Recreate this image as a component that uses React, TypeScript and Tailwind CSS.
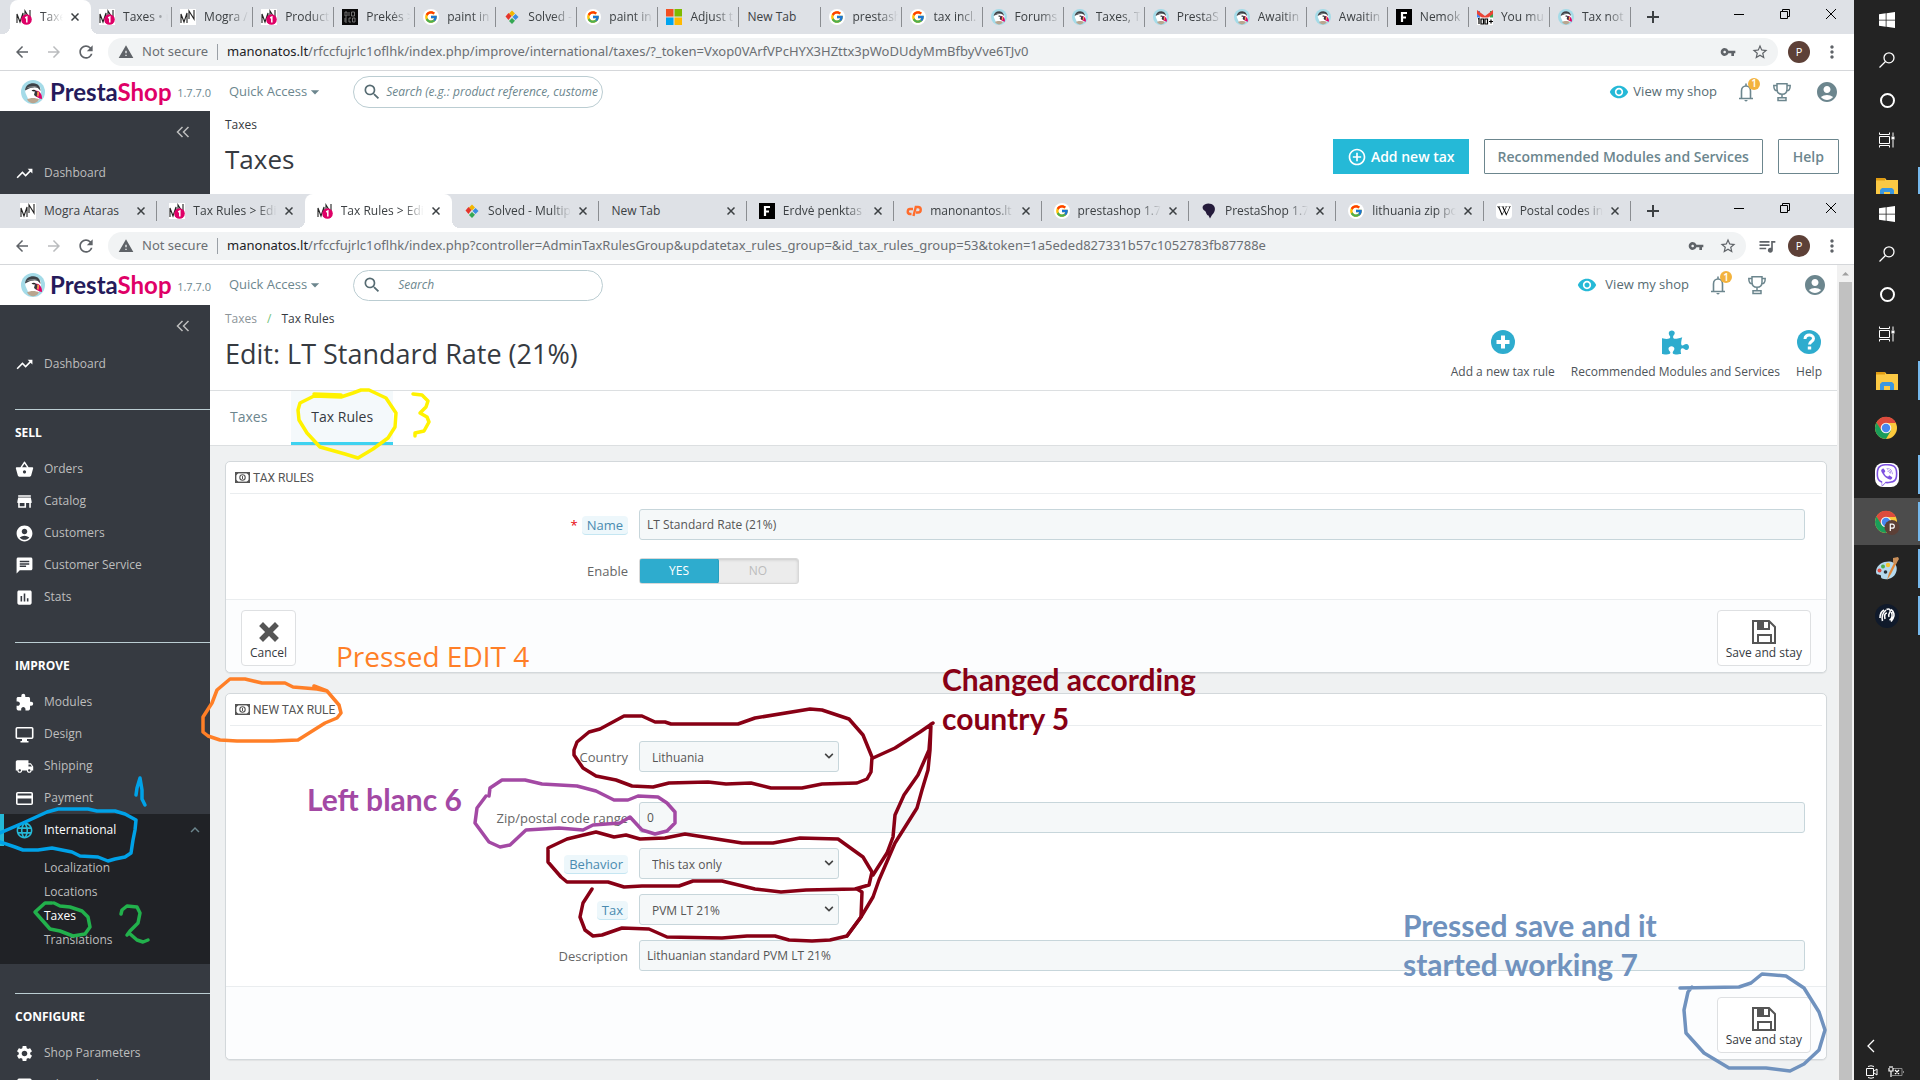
import React from "react";
import {
  MdAccountCircle,
  MdAddCircleOutline,
  MdArrowBack,
  MdArrowDropDown,
  MdArrowForward,
  MdAssessment,
  MdChat,
  MdExtension,
  MdKeyboardArrowUp,
  MdLanguage,
  MdLocalShipping,
  MdMoreVert,
  MdQueueMusic,
  MdRefresh,
  MdRemoveRedEye,
  MdSearch,
  MdSettings,
  MdSettingsApplications,
  MdShoppingBasket,
  MdStarBorder,
  MdStore,
  MdTrendingUp,
  MdVpnKey,
  MdWarning,
} from "react-icons/md";
import { FcGoogle } from "react-icons/fc";
import { FaChevronDown, FaPuzzlePiece, FaViber, FaWikipediaW } from "react-icons/fa";

/* ---------- Logos ---------- */

function Puffin({ className }: { className?: string }) {
  return (
    <svg viewBox="0 0 24 24" className={className} aria-hidden="true">
      <circle cx="12" cy="12" r="12" fill="#a4dbe8" />
      <path d="M4.500 13C3 7 7 4 12 4s9 3 8 9l-3 8H8z" fill="#fff" />
      <path d="M4 10.500C4.500 5.500 8 3.200 12.500 3.300 17 3.500 19.500 6.500 19.500 11c-2-3.200-4.500-4-7-3.600-3.500.2-5.500 1.600-8.500 3.100z" fill="#3c4146" />
      <path d="M5 8.500c4-2.800 8.500-3.200 12-1-4-.8-8.500 0-12 1z" fill="#7d8488" />
      <path d="M10.500 10.500c1.500-1.200 3.500-1 4.500.3-1 1.200-3.200 1-4.500-.3z" fill="#222" />
      <path d="M14.500 10.500c4 0 6.500 3 6.500 8.500-3-.5-6-2-7-4z" fill="#df0067" />
      <path d="M14 11l2.500.3-1 5.700-2.500-2z" fill="#33393d" />
      <path d="M16.500 11.500l1.500.8-.5 4.500-1.300-.8z" fill="#f5b04a" />
      <path d="M6 19.500c3-2 9-2 12 0-3 5-9 5-12 0z" fill="#b9a58f" />
    </svg>
  );
}

function Mogra({ badge }: { badge?: boolean }) {
  return (
    <svg viewBox="0 0 16 16" className="size-4" aria-hidden="true">
      <rect width="16" height="16" fill="#fff" />
      <path d="M1 14V5l3 8 3-9v10M9 10V2l5 8V1" fill="none" stroke="#222" strokeWidth="1.100" />
      {badge && <circle cx="10.500" cy="10.500" r="5.300" fill="#df0067" />}
      {badge && <path d="M9.200 9l1.600-1v5.500" fill="none" stroke="#fff" strokeWidth="1.500" />}
    </svg>
  );
}

function BlackF() {
  return (
    <svg viewBox="0 0 16 16" className="size-4" aria-hidden="true">
      <rect width="16" height="16" fill="#000" />
      <path d="M6 13V4h5M6 8.500h4" fill="none" stroke="#fff" strokeWidth="2.200" />
    </svg>
  );
}

function BioEco() {
  return (
    <svg viewBox="0 0 16 16" className="size-4" aria-hidden="true">
      <rect width="16" height="16" fill="#0a0a0a" />
      <path
        d="M3 3h2v4H3zM7 3v4M9.500 3h3v4h-3zM5 9H3v4h2M3 11h2M9 9H7v4h2M10.500 9h2.500v4h-2.500z"
        fill="none"
        stroke="#8a8a8a"
        strokeWidth=".8"
      />
    </svg>
  );
}

function Diamonds() {
  return (
    <svg viewBox="0 0 16 16" className="size-4" aria-hidden="true">
      <path d="M8 1.500l3 3-3 3-3-3z" fill="#f2b600" />
      <path d="M4.500 4l3 3-3 4-3-3.500z" fill="#e5352b" />
      <path d="M11.500 5l3 3-3 3-3-3z" fill="#3b8de0" />
      <path d="M8 9l3 2.800L8 15l-3-3z" fill="#35a853" />
    </svg>
  );
}

function Microsoft() {
  return (
    <svg viewBox="0 0 16 16" className="size-4" aria-hidden="true">
      <path d="M0 0h7.500v7.500H0z" fill="#f25022" />
      <path d="M8.500 0H16v7.500H8.500z" fill="#7fba00" />
      <path d="M0 8.500h7.500V16H0z" fill="#00a4ef" />
      <path d="M8.500 8.500H16V16H8.500z" fill="#ffb900" />
    </svg>
  );
}

function Gmail() {
  return (
    <svg viewBox="0 0 16 16" className="size-4" aria-hidden="true">
      <path d="M0 2h3v8H0z" fill="#4285f4" />
      <path d="M13 2h3v8h-3z" fill="#34a853" />
      <path d="M0 1l8 6 8-6v4l-8 6-8-6z" fill="#ea4335" />
      <rect y="8.500" width="16" height="7.500" fill="#fff" />
      <path
        d="M1 10l1-.5V15M4 10h2.500v5H4zM8 10h2.500v5H8zM12 12.500h4M14 10.500v4"
        fill="none"
        stroke="#000"
        strokeWidth="1.200"
      />
    </svg>
  );
}

function Google() {
  return (
    <span className="flex size-4 items-center justify-center rounded-full bg-white">
      <FcGoogle className="size-3.5" />
    </span>
  );
}

function HostPanel() {
  return (
    <svg viewBox="0 0 16 16" className="size-4" aria-hidden="true">
      <path d="M7 6H4.500a2.500 2.500 0 0 0-.5 5h1.500" fill="none" stroke="#ff6c2c" strokeWidth="2.400" />
      <path d="M7.500 13l2.300-9H12a2.700 2.700 0 0 1 0 5.500H10" fill="none" stroke="#ff6c2c" strokeWidth="2.400" />
    </svg>
  );
}

function DarkBird() {
  return (
    <svg viewBox="0 0 16 16" className="size-4" aria-hidden="true">
      <path d="M2 3C4 0 10-.5 13 3c2 3 .5 7-2 9l-2 3.500-1.500-3C5 12 5.500 9 4 8 2 7 1 5 2 3z" fill="#251b3b" />
    </svg>
  );
}

function Wikipedia() {
  return (
    <span className="flex size-4 items-center justify-center rounded-sm bg-white">
      <FaWikipediaW className="size-3.5 text-black" />
    </span>
  );
}

const PS = () => <Puffin className="size-4" />;

/* ---------- Browser chrome ---------- */

type Tab = { title: string; icon?: React.ReactNode; active?: boolean; fade?: boolean };

function TabItem({ tab, wide, sep }: { tab: Tab; wide: boolean; sep: boolean }) {
  const closable = wide || tab.active;
  return (
    <div
      className={
        "relative flex h-full min-w-0 items-center gap-2 " +
        (wide ? "pr-2 pl-3 first:pl-2.5 " : tab.active ? "pr-2 pl-1.5 " : "pr-1 pl-2 ") +
        (tab.active
          ? "rounded-t-lg bg-white before:absolute before:bottom-0 before:-left-2 before:size-2 before:bg-[radial-gradient(circle_at_0_0,transparent_8px,white_8px)] after:absolute after:-right-2 after:bottom-0 after:size-2 after:bg-[radial-gradient(circle_at_100%_0,transparent_8px,white_8px)]"
          : "")
      }
    >
      {tab.icon && <span className="shrink-0">{tab.icon}</span>}
      <button
        className={
          "min-w-0 flex-1 overflow-hidden text-left text-xs whitespace-nowrap text-[#3c4043] " +
          (tab.fade ? "[mask-image:linear-gradient(to_right,black_calc(100%-20px),transparent)]" : "")
        }
      >
        {tab.title}
      </button>
      {closable && (
        <button aria-label={"Close " + tab.title} className="-ml-1 flex size-4 shrink-0 items-center justify-center">
          <svg viewBox="0 0 8 8" className="size-2" aria-hidden="true">
            <path d="M.5.5l7 7M7.500.5l-7 7" stroke="#3c4043" strokeWidth="1.500" />
          </svg>
        </button>
      )}
      {sep && <span className="absolute top-[7px] right-0 h-5 w-px bg-[#8a8d91]" />}
    </div>
  );
}

function TabStrip({ tabs, wide }: { tabs: Tab[]; wide: boolean }) {
  return (
    <div className="flex h-[34px] shrink-0 bg-[#dee1e6] pl-2.5">
      <div className="grid min-w-0 flex-1 auto-cols-[minmax(0,1fr)] grid-flow-col">
        {tabs.map((t, i) => (
          <TabItem key={i} tab={t} wide={wide} sep={!t.active && !tabs[i + 1]?.active} />
        ))}
      </div>
      <div className="flex w-[223px] shrink-0 items-center">
        <button aria-label="New tab" className="flex w-11 justify-center">
          <svg viewBox="0 0 12 12" className="size-3" aria-hidden="true">
            <path d="M6 0v12M0 6h12" stroke="#3c4043" strokeWidth="2" />
          </svg>
        </button>
        <div className="ml-auto flex h-7 items-center self-start">
          <button aria-label="Minimize" className="flex w-[46px] justify-center">
            <svg viewBox="0 0 10 10" className="size-2.5" aria-hidden="true">
              <path d="M0 5.500h10" stroke="#000" />
            </svg>
          </button>
          <button aria-label="Restore" className="flex w-[46px] justify-center">
            <svg viewBox="0 0 10 10" className="size-2.5" aria-hidden="true">
              <path d="M.5 2.500h7v7h-7zM2.500 2.500v-2h7v7h-2" fill="none" stroke="#000" />
            </svg>
          </button>
          <button aria-label="Close window" className="flex w-[46px] justify-center">
            <svg viewBox="0 0 10 10" className="size-2.5" aria-hidden="true">
              <path d="M0 0l10 10M10 0L0 10" stroke="#000" />
            </svg>
          </button>
        </div>
      </div>
    </div>
  );
}

function AddressBar({ path, queue }: { path: string; queue?: boolean }) {
  return (
    <div className="flex h-[37px] shrink-0 items-center border-b border-[#d5d7da] bg-white pr-2.5 pl-1.5">
      <button aria-label="Back" className="flex w-8 justify-center text-[#5f6368]">
        <MdArrowBack className="size-[18px]" />
      </button>
      <button aria-label="Forward" className="flex w-8 justify-center text-[#babcbe]">
        <MdArrowForward className="size-[18px]" />
      </button>
      <button aria-label="Reload" className="flex w-8 justify-center text-[#5f6368]">
        <MdRefresh className="size-5" />
      </button>
      <div className="ml-1.5 flex h-7 min-w-0 flex-1 items-center rounded-full bg-[#f1f3f4] pl-2.5 font-['Noto_Sans'] text-[13px] text-[#6b6f73]">
        <MdWarning className="size-4 text-[#5f6368]" />
        <span className="ml-2">Not secure</span>
        <span className="mx-[9px] h-4 w-px bg-[#9aa0a6]" />
        <span className="min-w-0 flex-1 overflow-hidden whitespace-nowrap">
          <span className="text-[#202124]">manonatos.lt</span>
          {path}
        </span>
        <button aria-label="Saved passwords" className="flex w-8 justify-center text-[#5f6368]">
          <MdVpnKey className="size-4" />
        </button>
        <button aria-label="Bookmark" className="mr-0.5 flex w-8 justify-center text-[#5f6368]">
          <MdStarBorder className="size-[18px]" />
        </button>
      </div>
      {queue && (
        <button aria-label="Media" className="flex w-[42px] justify-center text-[#5f6368]">
          <MdQueueMusic className="size-5" />
        </button>
      )}
      <button
        aria-label="Profile"
        className={
          "flex size-[22px] items-center justify-center rounded-full bg-[#5d4037] text-[11px] text-white " +
          (queue ? "" : "ml-2.5")
        }
      >
        P
      </button>
      <button aria-label="Menu" className="ml-2.5 flex w-6 justify-center text-[#5f6368]">
        <MdMoreVert className="size-5" />
      </button>
    </div>
  );
}

/* ---------- Shop back office ---------- */

function Bell() {
  return (
    <button aria-label="Notifications" className="relative block size-6 text-[#6c868e]">
      <svg viewBox="0 0 24 24" className="size-6" aria-hidden="true">
        <path
          d="M5 18.500h14M7.500 18V11c0-3 2-5 4.500-5s4.500 2 4.500 5v7M12 6V3.500"
          fill="none"
          stroke="currentColor"
          strokeWidth="1.600"
        />
        <path d="M10 20h4l-2 1.800z" fill="currentColor" />
      </svg>
      <span className="absolute -top-0.5 left-3.5 flex size-3 items-center justify-center rounded-full bg-[#f3b33e] text-[10px] font-semibold text-white">
        1
      </span>
    </button>
  );
}

function Trophy() {
  return (
    <button aria-label="Achievements" className="text-[#6c868e]">
      <svg viewBox="0 0 20 20" className="size-5" aria-hidden="true">
        <path
          d="M5 1.800h10v5.500c0 3-2 5-5 5s-5-2-5-5zM5 3.500H1.800c0 3.500 1 5.500 3.700 5.500M15 3.500h3.200c0 3.500-1 5.500-3.700 5.500M10 12.500v3M6 15.800h8v2.700H6z"
          fill="none"
          stroke="currentColor"
          strokeWidth="1.500"
        />
      </svg>
    </button>
  );
}

function ShopHeader({ second }: { second?: boolean }) {
  return (
    <header className={"flex h-10 shrink-0 items-center bg-white " + (second ? "" : "pt-px")}>
      <div className="flex w-[211px] items-center pl-[21px]">
        <Puffin className="size-6 shrink-0" />
        <a href="#home" className="ml-[5px] font-['Lato'] text-2xl leading-6 font-bold text-[#251b5b]">
          Presta<span className="text-[#df0067]">Shop</span>
        </a>
        <span className="mt-1 ml-auto text-[11px] text-[#6c868e]">1.7.7.0</span>
      </div>
      <button className="ml-[18px] flex items-center text-[13px] text-[#6c868e]">
        Quick Access
        <MdArrowDropDown className="-ml-0.5 size-5" />
      </button>
      <label
        className={
          "ml-7 flex w-[250px] items-center rounded-full border border-[#bbcdd2] " + (second ? "h-[31px]" : "h-8")
        }
      >
        <MdSearch className="ml-2 size-5 shrink-0 text-[#566b72]" />
        <input
          aria-label="Search"
          placeholder={second ? "Search" : "Search (e.g.: product reference, custome"}
          className={
            "min-w-0 flex-1 bg-transparent text-xs italic outline-none placeholder:text-[#6c868e] " +
            (second ? "mr-2 ml-4" : "mr-1 ml-1")
          }
        />
      </label>
      <div className={"ml-auto flex items-center " + (second ? "pr-2.5" : "pr-[15px]")}>
        <a href="#shop" className={"flex items-center text-[13px] text-[#566b72] " + (second ? "gap-2" : "gap-1")}>
          <MdRemoveRedEye className="size-5 text-[#25b9d7]" />
          View my shop
        </a>
        <span className="ml-[17px] flex items-center">
          <Bell />
        </span>
        <span className={"flex " + (second ? "ml-[17px]" : "ml-3.5")}>
          <Trophy />
        </span>
        <button aria-label="Account" className={"text-[#6c868e] " + (second ? "ml-9" : "ml-[23px]")}>
          <MdAccountCircle className="size-6" />
        </button>
      </div>
    </header>
  );
}

function CollapseButton() {
  return (
    <button aria-label="Collapse menu" className="flex h-[43px] w-full items-center justify-end pr-5 pb-0.5">
      <svg viewBox="0 0 14 12" className="h-3 w-3.5" aria-hidden="true">
        <path d="M6.500 1l-5 5 5 5M12.500 1l-5 5 5 5" fill="none" stroke="#bebebe" strokeWidth="1.500" />
      </svg>
    </button>
  );
}

type NavItem = { label: string; Icon: React.ComponentType<{ className?: string }> };

function NavLink({ item }: { item: NavItem }) {
  return (
    <a href="#nav" className="flex h-8 items-center gap-2.5 pl-[15px] text-xs text-[#bebebe]">
      <item.Icon className="size-[19px] text-white" />
      {item.label}
    </a>
  );
}

function NavGroup({ title, items, children }: { title: string; items: NavItem[]; children?: React.ReactNode }) {
  return (
    <section className="mt-[29px]">
      <h2 className="ml-[15px] flex h-11 items-center border-t border-[#bbcdd2] pt-0.5 text-xs font-bold text-white">
        {title}
      </h2>
      {items.map((i) => (
        <NavLink key={i.label} item={i} />
      ))}
      {children}
    </section>
  );
}

function Monitor({ className }: { className?: string }) {
  return (
    <svg viewBox="0 0 19 19" className={className} aria-hidden="true">
      <rect x="1.300" y="2.800" width="16.400" height="10.400" rx="1" fill="none" stroke="currentColor" strokeWidth="1.600" />
      <path d="M7 14h5v2h1.500v1.500h-8V16H7z" fill="currentColor" />
    </svg>
  );
}

function Card({ className }: { className?: string }) {
  return (
    <svg viewBox="0 0 19 19" className={className} aria-hidden="true">
      <rect x="1.800" y="3.800" width="15.400" height="11.400" rx="1" fill="none" stroke="currentColor" strokeWidth="1.600" />
      <path d="M2 6.500h15v3H2z" fill="currentColor" />
    </svg>
  );
}

const sell: NavItem[] = [
  { label: "Orders", Icon: MdShoppingBasket },
  { label: "Catalog", Icon: MdStore },
  { label: "Customers", Icon: MdAccountCircle },
  { label: "Customer Service", Icon: MdChat },
  { label: "Stats", Icon: MdAssessment },
];
const improve: NavItem[] = [
  { label: "Modules", Icon: MdExtension },
  { label: "Design", Icon: Monitor },
  { label: "Shipping", Icon: MdLocalShipping },
  { label: "Payment", Icon: Card },
];
const configure: NavItem[] = [
  { label: "Shop Parameters", Icon: MdSettings },
  { label: "Advanced Parameters", Icon: MdSettingsApplications },
];
const dashboard: NavItem = { label: "Dashboard", Icon: MdTrendingUp };

function Sidebar() {
  return (
    <nav className="w-[210px] shrink-0 overflow-hidden bg-[#363a41]">
      <CollapseButton />
      <NavLink item={dashboard} />
      <NavGroup title="SELL" items={sell} />
      <NavGroup title="IMPROVE" items={improve}>
        <div className="bg-[#202226] pb-3">
          <a
            href="#international"
            className="flex h-8 items-center gap-2.5 border-l-4 border-[#25b9d7] pr-1.5 pl-[11px] text-xs text-white"
          >
            <MdLanguage className="size-[19px] text-[#25b9d7]" />
            International
            <MdKeyboardArrowUp className="ml-auto size-[18px] text-[#6c868e]" />
          </a>
          <ul className="pt-2.5 pl-11 text-xs leading-6 text-[#bebebe]">
            <li><a href="#localization">Localization</a></li>
            <li><a href="#locations">Locations</a></li>
            <li><a href="#taxes" className="text-white">Taxes</a></li>
            <li><a href="#translations">Translations</a></li>
          </ul>
        </div>
      </NavGroup>
      <NavGroup title="CONFIGURE" items={configure} />
    </nav>
  );
}

/* ---------- Tax form ---------- */

function MoneyIcon() {
  return (
    <svg viewBox="0 0 15 11" className="h-[11px] w-[15px]" aria-hidden="true">
      <rect x=".7" y=".7" width="13.600" height="9.600" fill="none" stroke="#555" strokeWidth="1.400" />
      <path d="M1 1h2.500L1 3.500zM14 1v2.500L11.500 1zM1 10V7.500L3.500 10zM14 10h-2.500L14 7.500z" fill="#555" />
      <circle cx="7.500" cy="5.500" r="2.700" fill="none" stroke="#555" strokeWidth="1.100" />
      <path d="M7.500 4v3" stroke="#555" />
    </svg>
  );
}

function SaveIcon() {
  return (
    <svg viewBox="0 0 24 24" className="size-6" aria-hidden="true">
      <path d="M1 1h16l6 6v16H1z" fill="none" stroke="#555" strokeWidth="2" />
      <path d="M6 1v8h11V1M6 23v-8h13v8" fill="none" stroke="#555" strokeWidth="2" />
      <path d="M6 1h6v8H6z" fill="#555" />
    </svg>
  );
}

function CancelIcon() {
  return (
    <svg viewBox="0 0 20 20" className="mb-0.5 size-5" aria-hidden="true">
      <path d="M4 4l12 12M16 4L4 16" stroke="#555" strokeWidth="5.500" strokeLinecap="square" />
    </svg>
  );
}

function PanelButton({ icon, label }: { icon: React.ReactNode; label: string }) {
  return (
    <button className="flex h-14 flex-col items-center justify-end rounded border border-[#dee0e2] bg-white px-2 pb-[3px] text-xs leading-[18px] text-[#363a41]">
      {icon}
      <span>{label}</span>
    </button>
  );
}

function Panel({
  title,
  cancel,
  children,
}: {
  title: string;
  cancel?: boolean;
  children: React.ReactNode;
}) {
  return (
    <section className="rounded-[5px] border border-[#d3d8db] bg-white shadow-[0_1px_1px_rgba(0,0,0,0.06)]">
      <h3 className="mx-1 flex h-8 items-center gap-[3px] border-b border-[#eaedef] pl-[5px] font-['Roboto'] text-xs text-[#555]">
        <MoneyIcon />
        {title}
      </h3>
      <div className="px-4 py-[15px]">{children}</div>
      <div className="flex items-start rounded-b-[5px] border-t border-[#eaedef] bg-[#fcfdfe] px-[15px] pt-2.5 pb-1.5">
        {cancel && <PanelButton icon={<CancelIcon />} label="Cancel" />}
        <span className="ml-auto">
          <PanelButton icon={<SaveIcon />} label="Save and stay" />
        </span>
      </div>
    </section>
  );
}

function Row({
  id,
  label,
  hint,
  required,
  children,
}: {
  id: string;
  label: string;
  hint?: boolean;
  required?: boolean;
  children: React.ReactNode;
}) {
  return (
    <div className="flex items-center">
      <label htmlFor={id} className="flex w-1/4 items-center justify-end pt-0.5 pr-1.5 text-[13px] text-[#666]">
        {required && <span className="mr-1 text-red-600">*</span>}
        {hint ? (
          <span className="rounded-sm border-b border-[#c5e6f2] bg-[#edf7fb] px-[5px] leading-[18px] text-[#4a8bb0]">
            {label}
          </span>
        ) : (
          label
        )}
      </label>
      <div className="w-3/4 px-[5px]">{children}</div>
    </div>
  );
}

const fieldClass = "block h-[31px] w-full rounded-[3px] border border-[#c7d6db] bg-[#f5f8f9] px-[7px] text-xs text-[#555]";

function SelectBox({ id, value }: { id: string; value: string }) {
  return (
    <div className="relative w-[200px]">
      <select
        id={id}
        className="block h-[31px] w-full appearance-none rounded-[3px] border border-[#c7d6db] bg-[#f5f8f9] px-3 pt-0.5 text-xs text-[#555]"
      >
        <option>{value}</option>
      </select>
      <FaChevronDown className="pointer-events-none absolute top-2.5 right-[5px] size-2.5 text-[#444]" />
    </div>
  );
}

function HeaderAction({ icon, label }: { icon: React.ReactNode; label: string }) {
  return (
    <button className="flex flex-col items-center gap-[9px] text-xs leading-[18px] text-[#4e5459]">
      <span className="flex h-6 items-center">{icon}</span>
      {label}
    </button>
  );
}

function TaxRulesPage() {
  return (
    <main className="flex min-w-0 flex-1 flex-col bg-[#eff1f2]">
      <div className="flex h-[86px] shrink-0 border-b border-[#dcdfe1] bg-white pr-[15px] pl-[15px]">
        <div>
          <nav aria-label="Breadcrumb" className="flex h-7 items-center gap-2.5 text-xs text-[#363a41]">
            <a href="#taxes" className="text-[#8c9499]">Taxes</a>
            <span className="text-[#72c279]">/</span>
            <a href="#rules">Tax Rules</a>
          </nav>
          <h1 className="text-[27px] leading-[42px] text-[#363a41]">Edit: LT Standard Rate (21%)</h1>
        </div>
        <div className="mt-[25px] ml-auto flex items-start gap-4">
          <HeaderAction
            label="Add a new tax rule"
            icon={
              <svg viewBox="0 0 24 24" className="size-6" aria-hidden="true">
                <circle cx="12" cy="12" r="12" fill="#2eacce" />
                <path d="M12 5.500v13M5.500 12h13" stroke="#fff" strokeWidth="4" />
              </svg>
            }
          />
          <HeaderAction
            label="Recommended Modules and Services"
            icon={<FaPuzzlePiece className="size-[27px] text-[#2eacce]" />}
          />
          <HeaderAction
            label="Help"
            icon={
              <svg viewBox="0 0 24 24" className="size-6" aria-hidden="true">
                <circle cx="12" cy="12" r="12" fill="#2eacce" />
                <path
                  d="M8 9c0-5.500 8.500-5 8.500-.5 0 3-4 3-4 6"
                  fill="none"
                  stroke="#fff"
                  strokeWidth="3"
                />
                <path d="M10.800 16.500h3.400v3h-3.400z" fill="#fff" />
              </svg>
            }
          />
        </div>
      </div>
      <div className="flex h-[55px] shrink-0 border-b border-[#dcdfe1] bg-white text-sm">
        <a href="#tab-taxes" className="flex items-center px-5 pb-0.5 text-[#6c868e]">Taxes</a>
        <a
          href="#tab-rules"
          className="ml-1 flex items-center border-b-[3px] border-[#3ed2f0] bg-[#f4f9fb] px-5 pt-px text-[#363a41]"
        >
          Tax Rules
        </a>
      </div>
      <div className="flex flex-col gap-5 pt-[15px] pr-2.5 pl-[15px]">
        <Panel title="TAX RULES" cancel>
          <div className="flex flex-col gap-[18px]">
            <Row id="name" label="Name" hint required>
              <input id="name" defaultValue="LT Standard Rate (21%)" className={fieldClass} />
            </Row>
            <Row id="enable-yes" label="Enable">
              <div className="flex h-[26px] w-40 overflow-hidden rounded-[3px] border border-[#d8d8d8] bg-[#ececec] text-xs text-[#bcbcbc] shadow-[inset_0_1px_3px_rgba(0,0,0,0.15)]">
                <label className="-m-px flex w-20 items-center justify-center rounded-[3px] border border-[#269fbf] bg-[#2eacce] text-white">
                  <input id="enable-yes" type="radio" name="enable" defaultChecked className="sr-only" />
                  YES
                </label>
                <label className="flex flex-1 items-center justify-center">
                  <input type="radio" name="enable" className="sr-only" />
                  NO
                </label>
              </div>
            </Row>
          </div>
        </Panel>
        <Panel title="NEW TAX RULE">
          <div className="flex flex-col gap-[15px]">
            <Row id="country" label="Country">
              <SelectBox id="country" value="Lithuania" />
            </Row>
            <div className="pt-[15px]">
              <Row id="zip" label="Zip/postal code range">
                <input id="zip" defaultValue="0" className={fieldClass} />
              </Row>
            </div>
            <Row id="behavior" label="Behavior" hint>
              <SelectBox id="behavior" value="This tax only" />
            </Row>
            <Row id="tax" label="Tax" hint>
              <SelectBox id="tax" value="PVM LT 21%" />
            </Row>
            <Row id="description" label="Description">
              <input id="description" defaultValue="Lithuanian standard PVM LT 21%" className={fieldClass} />
            </Row>
          </div>
        </Panel>
      </div>
    </main>
  );
}

/* ---------- Taskbar ---------- */

function WindowsLogo() {
  return (
    <svg viewBox="0 0 16 16" className="size-4" aria-hidden="true">
      <path d="M0 2.300l6.700-1v6.400H0zM7.500 1.200L16 0v7.700H7.500zM0 8.400h6.700v6.300L0 13.700zM7.500 8.400H16V16l-8.500-1.200z" fill="#fff" />
    </svg>
  );
}

function Explorer() {
  return (
    <svg viewBox="0 0 22 18" className="h-[18px] w-[22px]" aria-hidden="true">
      <path d="M0 0h9l1.500 2H22v16H0z" fill="#fbc944" />
      <path d="M0 0h9v2.500H0z" fill="#e09c12" />
      <path d="M4 18v-6l2-2h10l2 2v6h-4v-4H8v4z" fill="#3a97e0" />
    </svg>
  );
}

function Chrome({ profile }: { profile?: boolean }) {
  return (
    <svg viewBox="0 0 26 26" className="size-[26px]" aria-hidden="true">
      <circle cx="12" cy="13" r="11" fill="#fbc93c" />
      <path d="M2.500 7.500A11 11 0 0 1 22 8H12l-5 8z" fill="#dd4b3e" />
      <path d="M2.500 7.500A11 11 0 0 0 12 24l5-8.500H7.500z" fill="#1a9d5a" />
      <circle cx="12" cy="13" r="5.300" fill="#f1f1f1" />
      <circle cx="12" cy="13" r="4.200" fill="#4687f0" />
      {profile && <circle cx="18" cy="18.500" r="7.500" fill="#5d4037" />}
      {profile && <path d="M16.300 22v-6.800h2a2 2 0 0 1 0 4h-2" fill="none" stroke="#fff" strokeWidth="1.200" />}
    </svg>
  );
}

function Palette() {
  return (
    <svg viewBox="0 0 24 24" className="size-6" aria-hidden="true">
      <path d="M1 14C2 7 9 4 15 4.500c6 1 8 6 6 11-2 6-9 8-14 6-2-1 0-3-2-3.500S1 18 1 14z" fill="#b5d9ee" />
      <circle cx="4.500" cy="13.500" r="2" fill="#e04a3f" />
      <circle cx="8" cy="9.500" r="2" fill="#4caf50" />
      <circle cx="13" cy="8" r="2.200" fill="#f5c330" />
      <circle cx="10.500" cy="15" r="1.800" fill="#26323a" />
      <path d="M12 23l2-7 6-12 2 1-6 12z" fill="#e0873a" />
      <path d="M18 1l5-1 1 2-3 5-3-1z" fill="#c98f5a" />
    </svg>
  );
}

function Paw() {
  return (
    <svg viewBox="0 0 24 24" className="size-6" aria-hidden="true">
      <circle cx="12" cy="12" r="12" fill="#101a2b" />
      <path
        d="M5 14c0-4 2-7 4-8M7.500 17c-1-4 0-8 3.500-11M10 15c-1-4 0-6 2-6M11.500 5.500C14 4 16 6 15 8s-2 3-1 5M16 5.500c3 2 4 6 2 9l-2 3M14.500 16c3-1 3-5 2-8"
        fill="none"
        stroke="#fff"
        strokeWidth="1.600"
      />
    </svg>
  );
}

function AppSlot({ label, children, running, active }: { label: string; children: React.ReactNode; running?: boolean; active?: boolean }) {
  return (
    <button
      aria-label={label}
      className={
        "relative flex h-[47px] w-full items-center justify-center " + (active ? "bg-[#4c4c4c]" : "")
      }
    >
      {children}
      {running && <span className="absolute top-1 right-0 bottom-1 w-0.5 bg-[#76b9ed]" />}
    </button>
  );
}

function TaskbarTop() {
  return (
    <div className="pb-[3px]">
      <button aria-label="Start" className="flex h-10 w-full items-center justify-center">
        <WindowsLogo />
      </button>
      <button aria-label="Search" className="flex h-10 w-full items-center justify-center">
        <svg viewBox="0 0 16 16" className="size-4" aria-hidden="true">
          <circle cx="10" cy="5.800" r="5" fill="none" stroke="#fff" strokeWidth="1.300" />
          <path d="M6.500 9.500L.5 15.500" stroke="#fff" strokeWidth="1.300" />
        </svg>
      </button>
      <button aria-label="Cortana" className="flex h-10 w-full items-center justify-center">
        <span className="size-[15px] rounded-full border-2 border-white" />
      </button>
      <button aria-label="Task view" className="flex h-10 w-full items-center justify-center">
        <svg viewBox="0 0 16 16" className="size-4" aria-hidden="true">
          <path d="M.5 4.500h10v7H.5zM.5.500v2h10v-2M.5 15.500v-2h10v2M14 .500v3.500M14 8v7.500" fill="none" stroke="#fff" />
          <path d="M12.500 4.500h3v3h-3z" fill="#fff" />
        </svg>
      </button>
    </div>
  );
}

function Taskbar() {
  return (
    <aside className="flex w-[66px] shrink-0 flex-col bg-[#232323]">
      <div className="h-[194px] shrink-0 overflow-hidden">
        <TaskbarTop />
        <AppSlot label="File Explorer" running>
          <Explorer />
        </AppSlot>
      </div>
      <div className="flex min-h-0 flex-1 flex-col">
        <TaskbarTop />
        <AppSlot label="File Explorer" running>
          <Explorer />
        </AppSlot>
        <AppSlot label="Chrome">
          <Chrome />
        </AppSlot>
        <AppSlot label="Viber" running>
          <span className="flex size-6 items-center justify-center rounded-lg bg-white">
            <FaViber className="size-[22px] text-[#7d51e0]" />
          </span>
        </AppSlot>
        <AppSlot label="Chrome profile" running active>
          <Chrome profile />
        </AppSlot>
        <AppSlot label="Paint" running>
          <Palette />
        </AppSlot>
        <AppSlot label="Browser" running>
          <Paw />
        </AppSlot>
        <div className="mt-auto flex flex-col gap-3 pb-px pl-3">
          <svg viewBox="0 0 10 14" className="h-3.5 w-2.5" aria-hidden="true">
            <path d="M8 1L2 7l6 6" fill="none" stroke="#fff" strokeWidth="1.300" />
          </svg>
          <div className="flex gap-2.5">
            <svg viewBox="0 0 12 14" className="h-3.5 w-3" aria-hidden="true">
              <path d="M.5 3.500h7v7h-7zM8 6l3-2v6L8 8M2 1.500Q5 0 8 1.500M2 12.500Q5 14 8 12.500" fill="none" stroke="#fff" />
            </svg>
            <svg viewBox="0 0 16 14" className="h-3.5 w-4" aria-hidden="true">
              <path d="M5 3.500h9v7H4M15.500 6v2" fill="none" stroke="#8a8a8a" />
              <path d="M1 3v3h4V3M2 1v2M4 1v2M3 6v6M7 5l4 4M11 5l-4 4" fill="none" stroke="#fff" strokeWidth="1.200" />
            </svg>
          </div>
        </div>
      </div>
    </aside>
  );
}

/* ---------- Freehand notes ---------- */

const strokes = [
  { color: "#fff200", d: "M361 390L369 390L386 398L396 413L395 427L388 438L373 449L358 458L345 454L320 447L307 433L299 420L298 410L300 403L314 396L341 397L353 393L361 390M314 394L341 395" },
  { color: "#fff200", d: "M413 394L422 395L428 401L426 407L420 413L427 417L429 422L424 431L415 433L415 436" },
  { color: "#ff7f27", d: "M314 686L327 691L339 705L341 713L337 718L325 723L298 740L273 741L237 741L220 740L208 736L203 732L203 717L212 703L217 690L230 679L245 679L262 683L285 683L293 687L317 689L327 691" },
  { color: "#00a2e8", d: "M0 833L23 823L47 812L58 809L88 809L97 811L115 811L125 814L136 820L135 830L133 840L131 853L125 857L115 859L108 861L98 857L80 856L72 852L52 848L38 850L23 850L15 847L0 842" },
  { color: "#00a2e8", d: "M136 795L137 788L140 778L142 790L142 799L145 805" },
  { color: "#22b14c", d: "M52 903L45 903L35 912L50 929L60 931L73 936L85 934L90 927L88 917L82 911L70 907L60 906L54 903" },
  { color: "#22b14c", d: "M121 914L122 910L127 906L137 907L140 913L138 923L130 931L127 935L129 933L137 940L143 942L148 940" },
  { color: "#a349a4", d: "M489 796L490 788L502 780L525 780L542 784L577 786L596 791L614 800L628 800L638 796L658 797L667 803L675 812L675 823L667 831L655 834L642 830L630 817L620 823L593 825L583 830L559 828L526 830L510 845L500 847L489 842L475 823L477 808L486 796" },
  { color: "#880015", d: "M574 750L577 742L589 732L600 729L624 716L642 716L655 722L665 722L671 724L738 724L755 718L810 709L822 710L849 719L863 735L872 757L871 772L867 779L857 783L822 784L802 788L771 788L751 783L726 784L708 782L669 783L653 787L632 786L616 780L596 776L583 768L574 755Z" },
  { color: "#880015", d: "M596 832L614 837L626 835L640 839L665 838L685 834L742 843L773 843L800 838L838 839L863 857L872 872L869 885L855 889L806 890L781 892L755 889L722 881L693 881L679 886L642 886L624 887L608 882L567 882L561 877L548 862L548 848L567 839Z" },
  { color: "#880015", d: "M592 889L583 903L580 917L585 930L593 936L602 935L622 928L649 929L667 937L722 938L747 936L775 936L789 940L812 941L830 940L847 936L861 917L862 892L857 889" },
  { color: "#880015", d: "M873 758L895 748L920 732L933 723M931 724L929 750L918 775L904 795L895 815L893 837L887 853L873 875M931 724L930 750L928 770L922 790L917 808L895 843L879 880L873 897L861 917L847 936" },
  { color: "#7092be", d: "M1680 988L1739 987L1751 983L1762 974L1786 976L1804 988L1819 1012L1825 1030L1819 1050L1804 1064L1790 1071L1766 1068L1729 1068L1704 1053L1686 1033L1684 1010L1688 992L1692 987" },
];

function Notes() {
  return (
    <div className="pointer-events-none absolute inset-0 overflow-hidden">
      <svg viewBox="0 0 1920 1080" className="absolute top-0 left-0 h-[1080px] w-[1920px]" aria-hidden="true">
        {strokes.map((s, i) => (
          <path key={i} d={s.d} fill="none" stroke={s.color} strokeWidth="3.500" strokeLinecap="round" strokeLinejoin="round" />
        ))}
      </svg>
      <p className="absolute top-[636px] left-[336px] text-[28px] leading-10 whitespace-nowrap text-[#ff7f27]">Pressed EDIT 4</p>
      <p className="absolute top-[660px] left-[942px] font-['Lato'] text-[30px] leading-[39px] font-bold whitespace-nowrap text-[#880015]">
        Changed according
        <br />
        country 5
      </p>
      <p className="absolute top-[780px] left-[307px] font-['Lato'] text-[30px] leading-[39px] font-bold whitespace-nowrap text-[#a349a4]">
        Left blanc 6
      </p>
      <p className="absolute top-[906px] left-[1403px] font-['Lato'] text-[30px] leading-[39px] font-bold whitespace-nowrap text-[#7092be]">
        Pressed save and it
        <br />
        started working 7
      </p>
    </div>
  );
}

/* ---------- Page ---------- */

const topTabs: Tab[] = [
  { title: "Taxe", icon: <Mogra badge />, active: true, fade: true },
  { title: "Taxes • r", icon: <Mogra badge />, fade: true },
  { title: "Mogra /", icon: <Mogra />, fade: true },
  { title: "Product", icon: <Mogra badge />, fade: true },
  { title: "Prekės >", icon: <BioEco />, fade: true },
  { title: "paint in", icon: <Google />, fade: true },
  { title: "Solved -", icon: <Diamonds />, fade: true },
  { title: "paint in", icon: <Google />, fade: true },
  { title: "Adjust t", icon: <Microsoft />, fade: true },
  { title: "New Tab" },
  { title: "prestash", icon: <Google />, fade: true },
  { title: "tax incl.", icon: <Google />, fade: true },
  { title: "Forums", icon: <PS />, fade: true },
  { title: "Taxes, T", icon: <PS />, fade: true },
  { title: "PrestaS", icon: <PS />, fade: true },
  { title: "Awaitin", icon: <PS />, fade: true },
  { title: "Awaitin", icon: <PS />, fade: true },
  { title: "Nemok", icon: <BlackF />, fade: true },
  { title: "You mu", icon: <Gmail />, fade: true },
  { title: "Tax not", icon: <PS />, fade: true },
];

const bottomTabs: Tab[] = [
  { title: "Mogra Ataras", icon: <Mogra /> },
  { title: "Tax Rules > Edit", icon: <Mogra badge />, fade: true },
  { title: "Tax Rules > Edit", icon: <Mogra badge />, active: true, fade: true },
  { title: "Solved - Multip", icon: <Diamonds />, fade: true },
  { title: "New Tab" },
  { title: "Erdvė penktas s", icon: <BlackF />, fade: true },
  { title: "manonantos.lt -", icon: <HostPanel />, fade: true },
  { title: "prestashop 1.7 t", icon: <Google />, fade: true },
  { title: "PrestaShop 1.7.", icon: <DarkBird />, fade: true },
  { title: "lithuania zip po", icon: <Google />, fade: true },
  { title: "Postal codes in", icon: <Wikipedia />, fade: true },
];

export default function App() {
  return (
    <div className="relative flex h-screen overflow-hidden bg-white font-['Open_Sans',sans-serif]">
      <div className="flex min-w-0 flex-1 flex-col">
        <div className="flex h-[194px] shrink-0 flex-col overflow-hidden">
          <TabStrip tabs={topTabs} wide={false} />
          <AddressBar path="/rfccfujrlc1oflhk/index.php/improve/international/taxes/?_token=Vxop0VArfVPcHYX3HZttx3pWoDUdyMmBfbyVve6TJv0" />
          <ShopHeader />
          <div className="flex min-h-0 flex-1">
            <nav className="w-[210px] shrink-0 bg-[#363a41]">
              <CollapseButton />
              <div className="mt-[3px]">
                <NavLink item={dashboard} />
              </div>
            </nav>
            <main className="flex flex-1 justify-between pr-[15px] pl-[15px]">
              <div>
                <a href="#breadcrumb" className="flex h-7 items-center text-xs text-[#363a41]">Taxes</a>
                <h1 className="text-[26px] leading-10 text-[#363a41]">Taxes</h1>
              </div>
              <div className="mt-7 flex h-[35px] gap-[15px] text-sm font-semibold text-[#6c868e]">
                <button className="flex items-center gap-1 bg-[#25b9d7] px-3.5 text-white">
                  <MdAddCircleOutline className="size-5" />
                  Add new tax
                </button>
                <button className="rounded-[1px] border border-[#6c868e] px-[13px]">Recommended Modules and Services</button>
                <button className="rounded-[1px] border border-[#6c868e] px-3.5">Help</button>
              </div>
            </main>
          </div>
        </div>
        <div className="flex min-h-0 flex-1 flex-col overflow-hidden">
          <TabStrip tabs={bottomTabs} wide />
          <AddressBar
            queue
            path="/rfccfujrlc1oflhk/index.php?controller=AdminTaxRulesGroup&updatetax_rules_group=&id_tax_rules_group=53&token=1a5eded827331b57c1052783fb87788e"
          />
          <div className="flex min-h-0 flex-1">
            <div className="flex min-w-0 flex-1 flex-col">
              <ShopHeader second />
              <div className="flex min-h-0 flex-1">
                <Sidebar />
                <TaxRulesPage />
              </div>
            </div>
            <div className="flex w-[17px] shrink-0 flex-col items-center bg-[#f1f1f1]">
              <svg viewBox="0 0 17 17" className="size-[17px] shrink-0" aria-hidden="true">
                <path d="M5 10.500L8.500 7l3.500 3.500z" fill="#a0a0a0" />
              </svg>
              <span className="w-[13px] flex-1 bg-[#c1c1c1]" />
            </div>
          </div>
        </div>
      </div>
      <Taskbar />
      <Notes />
    </div>
  );
}
